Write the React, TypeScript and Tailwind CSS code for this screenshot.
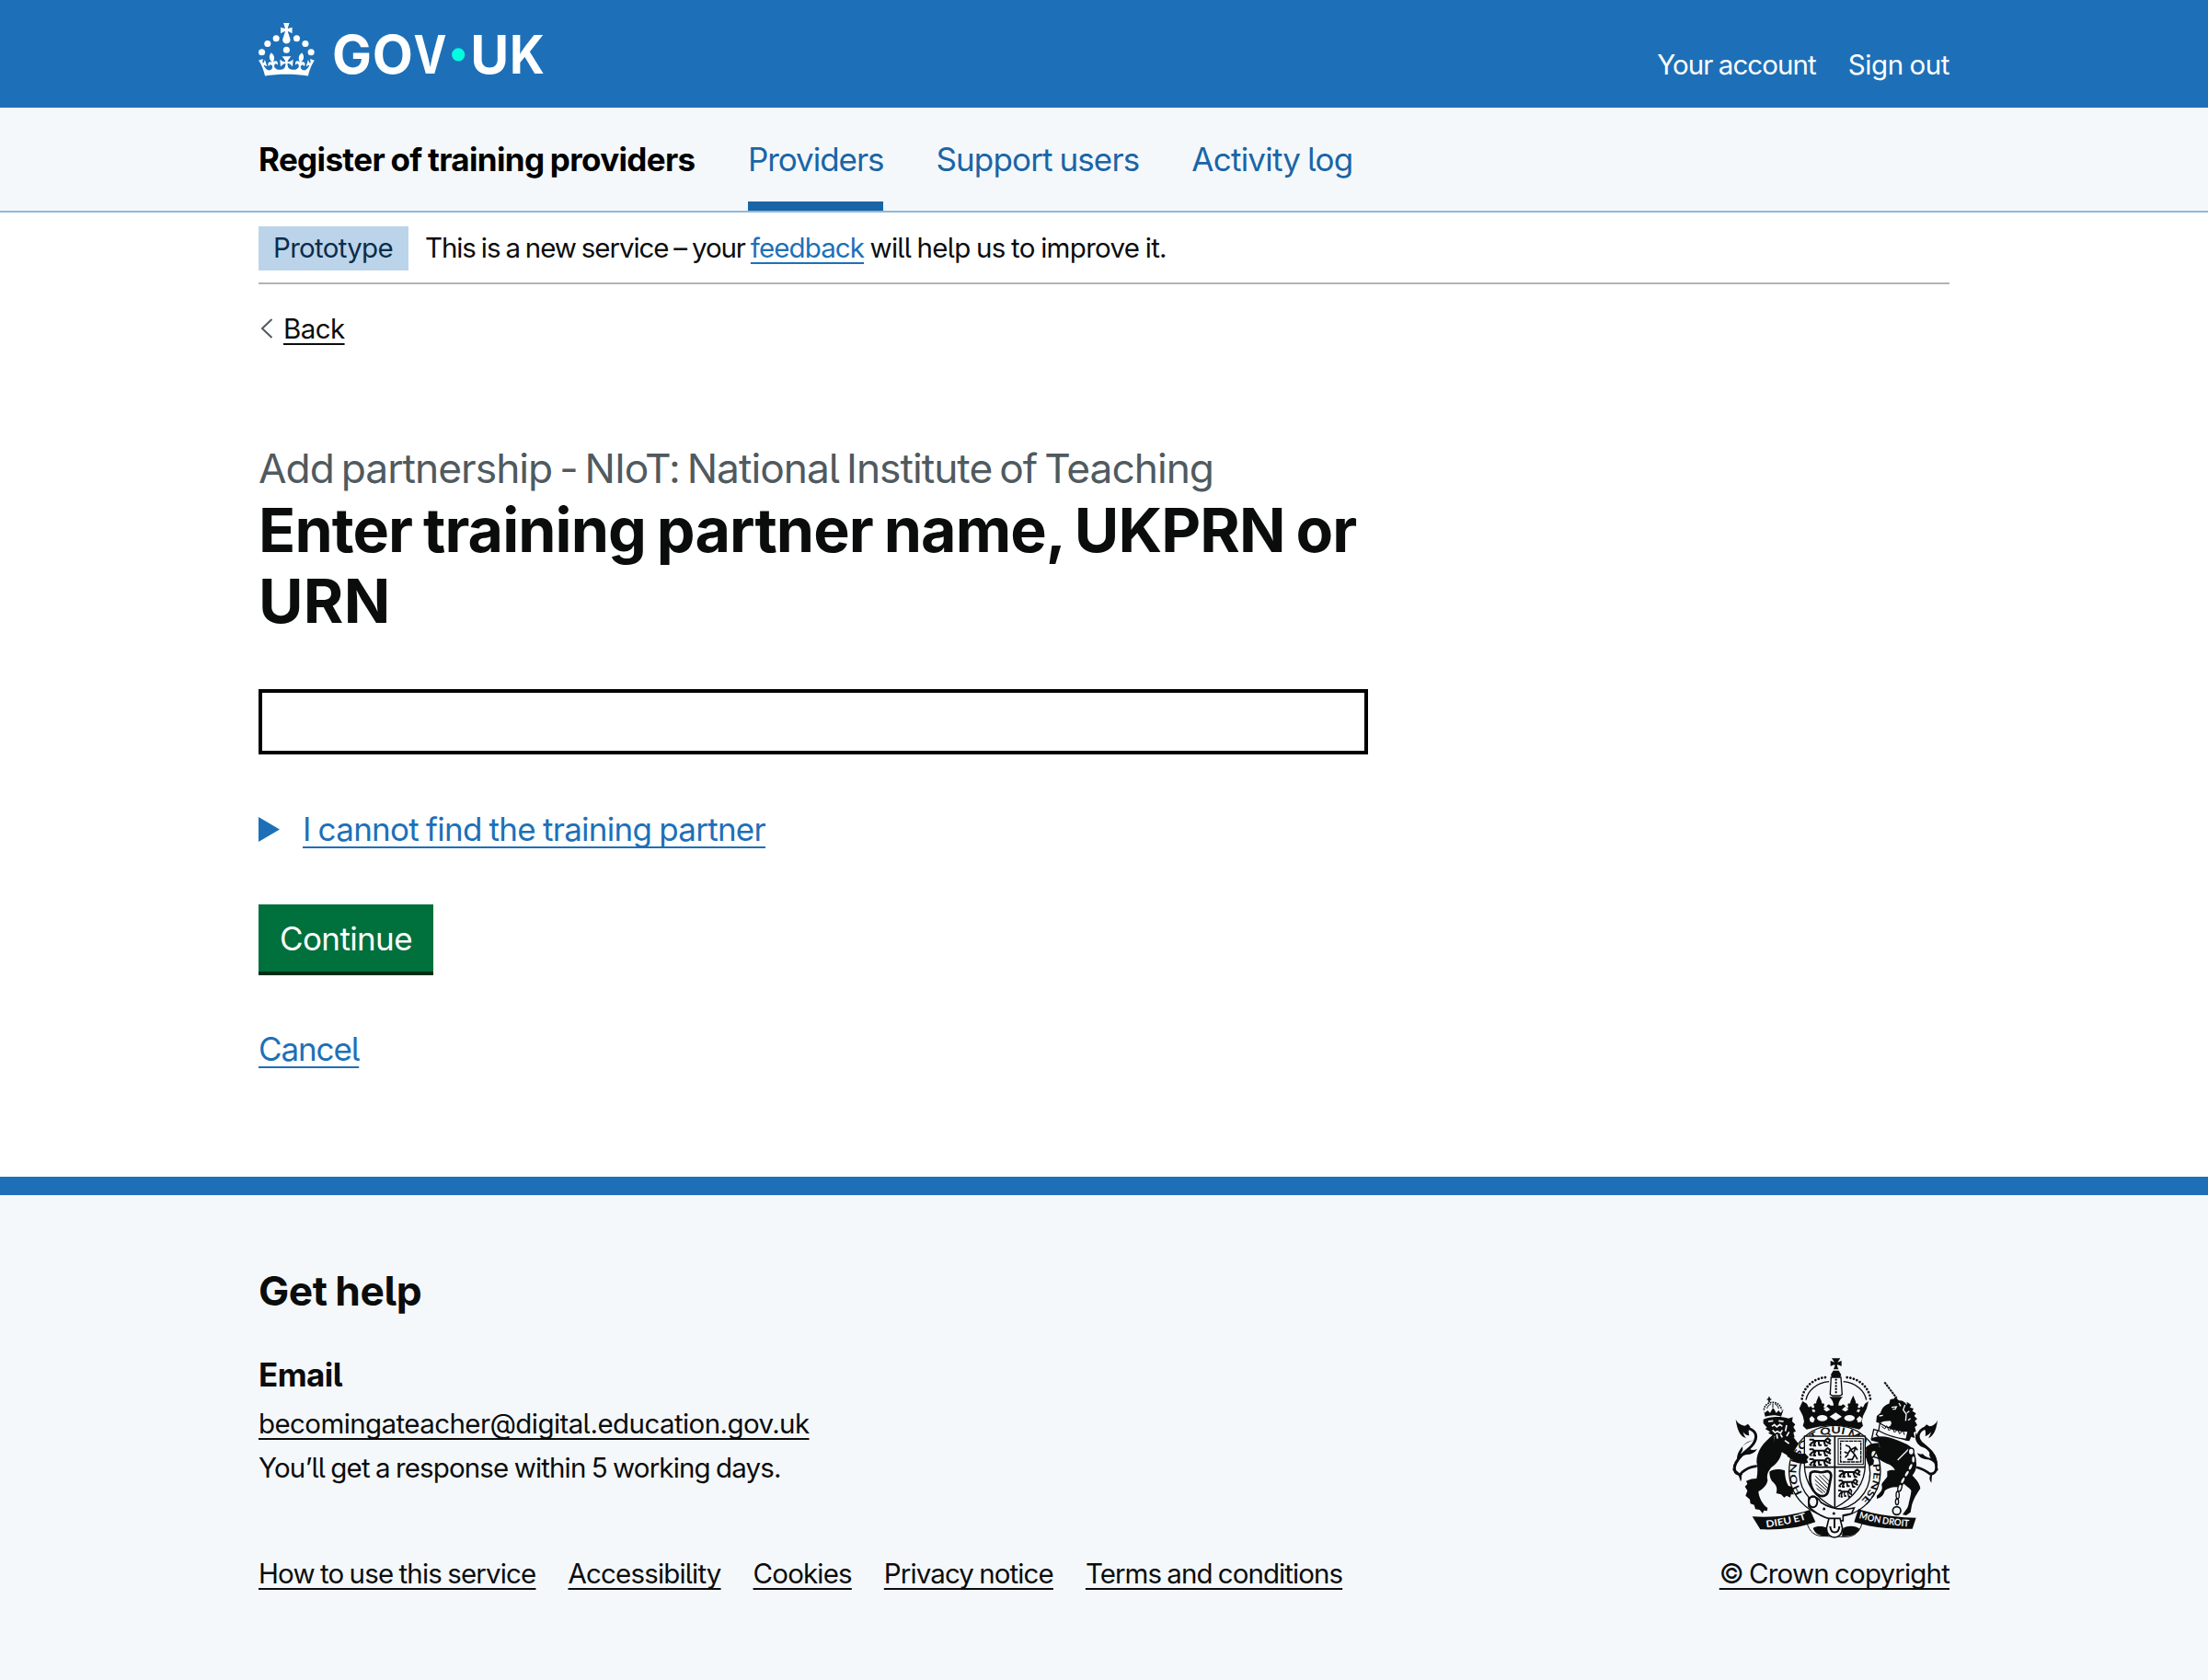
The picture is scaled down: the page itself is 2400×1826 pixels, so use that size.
import type { ReactNode } from 'react';

const INK = '#0b0c0c';
const PAPER = '#f4f8fb';

function Container({ children, className = '' }: { children: ReactNode; className?: string }) {
  return <div className={`mx-auto w-[1838px] ${className}`}>{children}</div>;
}

function Logo() {
  return (
    <svg viewBox="0 0 324 60" className="mt-[25px] h-[57.4px] w-[310px] overflow-visible" fill="#fff" aria-label="GOV.UK">
      <circle cx="20" cy="17.6" r="3.7" />
      <circle cx="10.2" cy="23.5" r="3.7" />
      <circle cx="3.7" cy="33.2" r="3.7" />
      <circle cx="31.7" cy="30.6" r="3.7" />
      <circle cx="43.3" cy="17.6" r="3.7" />
      <circle cx="53.2" cy="23.5" r="3.7" />
      <circle cx="59.7" cy="33.2" r="3.7" />
      <path d="M33.1,9.8c.2-.1.3-.3.5-.5l4.6,2.4v-6.8l-4.6,1.5c-.1-.2-.3-.3-.5-.5l1.9-5.9h-6.7l1.9,5.9c-.2.1-.3.3-.5.5l-4.6-1.5v6.8l4.6-2.4c.1.2.3.3.5.5l-2.6,8c-.9,2.8,1.2,5.7,4.1,5.7h0c3,0,5.1-2.9,4.1-5.7l-2.6-8ZM37,37.9s-3.4,3.8-4.1,6.1c2.2,0,4.2-.5,6.4-2.8l-.7,8.5c-2-2.8-4.4-4.1-5.7-3.8.1,3.1.5,6.7,5.8,7.2,3.7.3,6.7-1.5,7-3.8.4-2.6-2-4.3-3.7-1.6-1.4-4.5,2.4-6.1,4.9-3.2-1.9-4.5-1.8-7.7,2.4-10.9,3,4,2.6,7.3-1.2,11.1,2.4-1.3,6.2,0,4,4.6-1.2-2.8-3.7-2.2-4.2.2-.3,1.7.7,3.7,3,4.2,1.9.3,4.7-.9,7-5.9-1.3,0-2.4.7-3.9,1.7l2.4-8c.6,2.3,1.4,3.7,2.2,4.5.6-1.6.5-2.8,0-5.3l5,1.8c-2.6,3.6-5.2,8.7-7.3,17.5-7.4-1.1-15.7-1.7-24.5-1.7h0c-8.8,0-17.1.6-24.5,1.7-2.1-8.9-4.7-13.9-7.3-17.5l5-1.8c-.5,2.5-.6,3.7,0,5.3.8-.8,1.6-2.3,2.2-4.5l2.4,8c-1.5-1-2.6-1.7-3.9-1.7,2.3,5,5.2,6.2,7,5.9,2.3-.4,3.3-2.4,3-4.2-.5-2.4-3-3.1-4.2-.2-2.2-4.6,1.6-6,4-4.6-3.7-3.7-4.2-7.1-1.2-11.1,4.2,3.2,4.3,6.4,2.4,10.9,2.5-2.8,6.3-1.3,4.9,3.2-1.8-2.7-4.1-1-3.7,1.6.3,2.3,3.3,4.1,7,3.8,5.4-.5,5.7-4.2,5.8-7.2-1.3-.2-3.7,1-5.7,3.8l-.7-8.5c2.2,2.3,4.2,2.7,6.4,2.8-.7-2.3-4.1-6.1-4.1-6.1h10.6,0Z" />
      <g fontFamily="Inter, sans-serif" fontWeight="700" fontSize="59.9">
        <text x="83.500" y="57.5">G</text>
        <text x="129.3" y="57.5">O</text>
        <text x="176.2" y="57.5" textLength="37.5" lengthAdjust="spacingAndGlyphs">V</text>
        <text x="240.8" y="57.5">U</text>
        <text x="285.500" y="57.5" textLength="39.6" lengthAdjust="spacingAndGlyphs">K</text>
      </g>
      <circle cx="227" cy="36" r="7.4" fill="#00ffe0" />
    </svg>
  );
}

function HeraldicLion({ x, y, w = 78 }: { x: number; y: number; w?: number }) {
  return (
    <g transform={`translate(${x} ${y}) scale(${w / 78} 1)`}>
      <path
        fill="none"
        stroke={INK}
        strokeWidth="6"
        strokeLinejoin="round"
        d="M4 6l12 0 4 6 -12 8M18 10h38l8 6 10 4M24 12l-6 14h8M52 12l4 14h8M34 12l2 12h8M56 8l8-6 8 6-4 6M4 22l8 4"
      />
    </g>
  );
}

/* Royal coat of arms: crown, garter and shield, lion, unicorn and motto scrolls. */
function RoyalArms() {
  return (
    <svg viewBox="60 40 690 600" className="mr-[9px] h-[200px] w-[230px]" fill={INK} aria-label="Royal coat of arms">
      <defs>
        <path id="garter" d="M299 491A126 126 0 1 1 484 518" />
        <path id="scrollLeft" d="M180 602C228 596 268 588 314 573" />
        <path id="scrollRight" d="M481 571C530 586 580 594 650 600" />
      </defs>

      {/* crown */}
      <path d="M393 50h28l-9 13 13-5v18l-12-5-3 2 5 13h-16l5-13-3-2-12 5V58l13 5z" />
      <path d="M398 90h18l8 14-4 9-13 4-13-4-4-9z" />
      <path d="M391 112l-3 56 8 4h24l7-4-4-56z" fill={PAPER} stroke={INK} strokeWidth="4" />
      <path d="M407 120v48" stroke={INK} strokeWidth="7" strokeLinecap="round" strokeDasharray="0.1 10" fill="none" />
      <path d="M296 182C300 145 335 112 380 112M519 182C515 145 480 112 435 112" fill="none" stroke={INK} strokeWidth="8" strokeLinecap="round" strokeDasharray="0.1 11" />
      <path d="M309 186C314 158 340 130 384 126M506 186C501 158 475 130 431 126" fill="none" stroke={INK} strokeWidth="4" />
      <path d="M298 190l14 8 6 12 8-4c2 8 8 8 11 2-4-4-4-8 0-11 4 2 6 0 6-6l8-20 9 20c0 6 2 8 6 6 4 2 4 7 0 11 3 6 8 6 11-2 3-6 8-8 12-2l10 0c0-12-6-20-14-28h44c-8 8-14 16-14 28l10 0c4-6 9-4 12 2 3 8 8 8 11 2-4-4-4-9 0-11 4 2 6 0 6-6l9-20 8 20c0 6 2 8 6 6 4 3 4 7 0 11 3 6 9 6 11-2l7 4 6-12 12-8-6 24-12 24-4 18 4 14-12 12a300 300 0 0 0-172 0l-12-12 4-14-4-18-12-24z" />
      <g fill={PAPER}>
        <ellipse cx="362" cy="245" rx="17" ry="10" />
        <path d="M386 240l20-13 20 13-20 13z" />
        <ellipse cx="451" cy="245" rx="17" ry="10" />
        <path d="M320 246l8-8 10 10-5 12-10-3zM492 246l-8-8-10 10 5 12 10-3z" />
        <path d="M366 216l12-8 10 10-12 6zM448 216l-12-8-10 10 12 6zM328 218l8-2 4 8-8 2zM486 218l-8-2-4 8 8 2z" />
      </g>

      {/* lion tail */}
      <g fill="none" stroke={INK} strokeLinecap="round">
        <path d="M120 278C148 286 152 306 138 328S84 368 76 404" strokeWidth="9" />
        <path d="M76 404c-2 22 10 26 22 24M98 424c14-12 26-20 48-22" strokeWidth="8" />
      </g>
      <path d="M80 250c8 14 18 18 30 20l10-6 8 10c-8 8-6 16-4 28-10 0-16-6-20-12 2 8 4 14 10 20-18-4-28-20-34-60z" />
      <path d="M138 318c-14 0-28 8-36 20 2 8 0 16-6 22 12 2 22-4 30-14 6 4 14 4 24 0-8 12-20 18-34 18-16 2-26 14-30 28-4-14-2-30 8-44 8-14 24-26 44-30z" />
      <path d="M74 394l-4 20 20 20 6 18c4-8 4-14 2-22l-16-14z" />

      {/* unicorn tail */}
      <g fill="none" stroke={INK} strokeLinecap="round">
        <path d="M700 276C670 288 668 312 690 330S734 366 734 400" strokeWidth="9" />
        <path d="M734 402c0 24-12 26-22 24M714 428c-14-12-26-18-42-22" strokeWidth="8" />
      </g>
      <path d="M738 252c-6 12-14 18-26 20l-10-6-10 12c8 6 8 16 6 26 8-2 14-6 18-14 0 8-4 14-8 20 16-6 26-24 30-58z" />
      <path d="M668 292c-6 20 0 34 16 46 14 4 24 10 28 20-2 6 0 12 4 18-12-2-20-6-26-14-6 2-12 0-18-4 4 14 16 20 32 22 16 2 26 12 30 26 4-16 2-32-8-46-10-16-26-20-40-32z" />
      <path d="M736 394l4 20-20 18-2 24c-6-8-8-16-4-24l16-16z" />

      {/* lion body and legs */}
      <path d="M206 326l34-26 26 4c14 20 28 36 44 54l10 24-10 14-34-4-28-26-18-10c-4 22-14 36-34 50-12 14-16 26-12 42-2 14-14 28-30 36 2 20 10 34 22 48l8 6-2 10-10-2-4 10-10-12-14-2-4-14-12-4-2-14-14-12 6-16-8-14 8-8-4-10c14-6 22-8 34-8 4-18 4-36 0-54 0-34 20-62 58-92z" />
      <path d="M190 420c10-10 34-10 50-4 0 20 4 38 12 50 10 2 16 6 20 12l-6 8 4 8-10 0-2 10-12-6-8 6-10-10-16-4c4-14 2-24-8-34-10-8-14-20-14-36z" />

      {/* lion head, mane and crown */}
      <path d="M170 250c14-10 60-12 82-4l14-4-2 14 10 10-6 8 8 14-8 4 4 16-10 0c2 12-6 18-18 22-16 2-30 0-40-6l4-20-22-10 6-4-16-10 6-4-12-14z" />
      <path d="M186 256l16-2M220 254l16 2M198 272l8-6 8 8 10-8 8 6M200 284l8 8 8-4 10 6 6-10M214 298l2 14M226 298l6 10M246 268l-4 20M254 290l-8 14M240 318l14 10" stroke={PAPER} strokeWidth="5" fill="none" />
      <path d="M172 218c2-16 14-24 28-24s26 8 30 24" fill="none" stroke={INK} strokeWidth="5" strokeDasharray="5 3" />
      <path d="M182 214c2-8 6-12 12-14M220 214c-2-8-6-12-12-14M201 198v14" fill="none" stroke={INK} strokeWidth="3" />
      <path d="M170 216l6 24c18-6 36-6 52 0l8-24-10 12-6-8-8 8-8-14h-4l-8 14-8-8-10 8z" />
      <path d="M182 184h14M189 176v18" stroke={INK} strokeWidth="5" fill="none" />

      {/* unicorn horn, head, mane */}
      <path d="M565 128l40 52" stroke={INK} strokeWidth="6" strokeDasharray="8 2" fill="none" />
      <path d="M540 238l12-10c6-18 14-26 28-30l4-14 12-2 4-6 12 12c14-2 20 6 26 14l0-10 14 10-4 8 12 4-4 8 12 8-6 8 10 10-8 6 8 14-8 6 4 14-8 4 4 18-12-4-6 14-12-2c-16-6-42-12-76-28 4-8 16-14 26-20 6-8 4-14-2-16-12 2-22 0-30 8l-14-4z" />
      <path d="M588 210l16-2-4 8-8 0M632 202l-6 16 10 14-2 22M646 222l-8 6M650 246l-8 6M548 238l12-2M612 196l6 10" stroke={PAPER} strokeWidth="4" fill="none" />
      <path d="M550 262c24 16 58 26 92 26l-6 26c-34-4-66-14-90-28z" fill={PAPER} stroke={INK} strokeWidth="4" />
      <path d="M556 272l10 8 6-10 8 16 10-10 8 16 10-10 6 14 12-10 4 14" stroke={INK} strokeWidth="3" fill="none" />
      <path d="M530 282l14 4-6 12 8 8-10 12-12-8z" fill={PAPER} stroke={INK} strokeWidth="4" />

      {/* unicorn body */}
      <path d="M520 312c30-14 60-6 90 6l28 12c20 10 28 28 30 56 4 20-2 34-12 46 12 12 24 26 26 42-10 16-22 32-28 56l-4 22-14 10-12-2c10-16 18-20 20-36 4-20 8-30 8-44-16-18-40-28-48-48-4-20-10-32-30-38-12-6-24-12-34-22l-12-8c-4 12 0 22 6 30l-2 14-12 6c-10-14-14-32-12-56 10-12 24-16 42-18l-4-16-24-6z" />
      <path d="M574 418c14-6 28-6 38 4l20 24-10 26c-24-6-46 0-56 10-4 16-14 24-26 26l0-10c14-12 20-20 16-34-2-6 10-16 18-28z" />
      <path d="M644 346l-36 36" stroke={PAPER} strokeWidth="4" fill="none" />
      <g fill={PAPER} stroke={INK} strokeWidth="4">
        <ellipse cx="652" cy="354" rx="9" ry="11" />
        <ellipse cx="659" cy="380" rx="6" ry="12" />
        <ellipse cx="650" cy="404" rx="6" ry="12" transform="rotate(25 650 404)" />
        <ellipse cx="638" cy="426" rx="6" ry="12" transform="rotate(30 638 426)" />
        <ellipse cx="625" cy="448" rx="6" ry="12" transform="rotate(25 625 448)" />
        <ellipse cx="615" cy="472" rx="6" ry="12" transform="rotate(15 615 472)" />
        <ellipse cx="608" cy="496" rx="5" ry="12" />
        <ellipse cx="606" cy="518" rx="5" ry="10" />
      </g>
      <circle cx="605" cy="547" r="13" fill="none" stroke={INK} strokeWidth="5" />

      {/* garter */}
      <ellipse cx="403" cy="418" rx="149" ry="149" fill={PAPER} stroke={INK} strokeWidth="4" />
      <ellipse cx="403" cy="424" rx="115" ry="118" fill={PAPER} stroke={INK} strokeWidth="4" />
      <g fontFamily="Lato, sans-serif" fontWeight="700" fontSize="31">
        <text>
          <textPath href="#garter" startOffset="2" textLength="572" lengthAdjust="spacingAndGlyphs">HONI SOIT QUI MAL Y PENSE</textPath>
        </text>
      </g>

      {/* shield */}
      <path d="M304 304h198v92c0 66-42 112-99 142-57-30-99-76-99-142z" fill={PAPER} stroke={INK} strokeWidth="4" />
      <path d="M403 304v232M304 405h198" stroke={INK} strokeWidth="5" fill="none" />
      <HeraldicLion x={316} y={309} />
      <HeraldicLion x={316} y={341} />
      <HeraldicLion x={316} y={373} />
      <HeraldicLion x={412} y={411} />
      <HeraldicLion x={412} y={443} w={70} />
      <HeraldicLion x={412} y={475} w={50} />
      <rect x="414" y="312" width="82" height="84" fill="none" stroke={INK} strokeWidth="3" />
      <rect x="422" y="320" width="66" height="68" fill="none" stroke={INK} strokeWidth="4" strokeDasharray="12 2" />
      <path d="M440 334l10 4 6 10 14-8 6 8M454 348l-8 12-10-4M456 350l12 14-8 16-14 0M468 364l8 14M446 364l-8 8M470 344l-4 10" fill="none" stroke={INK} strokeWidth="5" strokeLinecap="round" />
      <path d="M324 424c14-14 30 4 46-4 14-6 24 4 20 20l-8 40c-4 20-20 24-36 14-18-12-28-40-22-70z" fill={PAPER} stroke={INK} strokeWidth="8" />
      <path d="M340 434l40 40M338 446l40 36M340 460l32 28M352 432l32 32M364 430l22 22M344 474l20 16" stroke={INK} strokeWidth="3" fill="none" />

      {/* paw and hoof resting on the garter */}
      <path d="M246 330l28 26 18 6 14-2 12 12-6 8 4 10-14 4-20-2-34-22z" />
      <path d="M548 326c-20 0-34 6-42 14-4 22-2 42 10 62l13-6 2-14c-8-8-10-18-6-28l24-6z" />

      {/* strap and buckle */}
      <path d="M318 506c20-10 34 0 40 14 30 20 70 26 108 18l-8 18-28 6 0 18c-44 0-82-18-112-46z" fill={PAPER} stroke={INK} strokeWidth="5" />
      <ellipse cx="332" cy="518" rx="14" ry="18" fill="none" stroke={INK} strokeWidth="6" />
      <circle cx="368" cy="541" r="4.500" />
      <circle cx="400" cy="556" r="4.500" />

      {/* scrolls */}
      <path d="M134 566c66 4 126-2 188-22l18 40c-56 20-112 26-180 24z" />
      <path d="M668 570c-62-2-124-8-188-28l-14 42c56 18 120 24 190 22z" />
      <g fontFamily="Lato, sans-serif" fontWeight="700" fontSize="31" fill={PAPER}>
        <text>
          <textPath href="#scrollLeft" textLength="134" lengthAdjust="spacingAndGlyphs">DIEU ET</textPath>
        </text>
        <text>
          <textPath href="#scrollRight" textLength="166" lengthAdjust="spacingAndGlyphs">MON DROIT</textPath>
        </text>
      </g>
      <path d="M312 586c8 30 26 46 60 44l60 2c36 2 52-16 60-44" fill="none" stroke={INK} strokeWidth="3" />
      <path d="M332 604c10-8 34-8 46 0l4 26c-24 0-42-4-50-26zM484 606c-12-10-38-12-54-2l-4 26c26 0 46-2 58-24z" />
      <path d="M384 572h36l8 32c0 20-14 30-26 30s-26-10-26-30z" fill={PAPER} stroke={INK} strokeWidth="5" />
      <path d="M388 598c2 26 28 26 30 0M402 574v30" fill="none" stroke={INK} strokeWidth="6" />
    </svg>
  );
}

const link = 'underline decoration-2 underline-offset-[5px] [text-decoration-skip-ink:none]';
const linkLarge = 'underline decoration-2 underline-offset-[6px] [text-decoration-skip-ink:none]';

export default function App() {
  return (
    <div className="min-h-[1826px] bg-white font-['Inter',sans-serif] text-[29.5px] leading-[40px] text-[#0b0c0c] [font-feature-settings:'cv05'] [word-spacing:-1.2px]">
      <header className="h-[117px] bg-[#1d70b8] text-white">
        <Container className="flex justify-between">
          <Logo />
          <nav className="flex gap-[35px] pt-[50px]">
            <a className="tracking-[-0.031em]">Your account</a>
            <a className="tracking-[-0.014em]">Sign out</a>
          </nav>
        </Container>
      </header>

      <section className="border-b-2 border-[#8eb8dc] bg-[#f4f8fb]">
        <Container className="flex h-[112px] gap-[57px] text-[35px] text-[#1a65a6]">
          <span className="flex w-[475px] items-center font-bold whitespace-nowrap tracking-[-0.0185em] text-black">
            Register of training providers
          </span>
          <a className="flex items-center border-y-[10px] border-t-transparent border-b-[#1a65a6] tracking-[-0.03em]">Providers</a>
          <a className="flex items-center tracking-[-0.0245em]">Support users</a>
          <a className="flex items-center tracking-[-0.022em]">Activity log</a>
        </Container>
      </section>

      <Container>
        <div className="flex items-center gap-[18px] border-b-2 border-[#b1b4b6] pt-[15px] pb-[13px]">
          <strong className="flex h-12 w-[163px] items-center justify-center bg-[#bbd4ea] pr-px pb-[3px] font-normal tracking-[-0.024em] text-[#0c2d4a]">
            Prototype
          </strong>
          <p className="pb-[3px] tracking-[-0.037em]">
            This is a new service – your <a className={`tracking-[-0.031em] text-[#1d70b8] ${link}`}>feedback</a>
            <span className="tracking-[-0.0235em]"> will help us to improve it.</span>
          </p>
        </div>

        <a className="mt-7 flex items-center">
          <svg viewBox="0 0 14 22" className="mr-[11px] ml-[2px] h-[22px] w-[14px]" fill="none" stroke="#505a5f" strokeWidth="2">
            <path d="M12.500 1L2 11l10.500 10" />
          </svg>
          <span className={`tracking-[-0.02em] ${link}`}>Back</span>
        </a>

        <main className="mt-[104px] flex flex-col items-start">
          <span className="text-[44.3px] leading-[56px] tracking-[-0.0225em] text-[#505a5f] [word-spacing:-3.5px]">
            Add partnership - NIoT: National Institute of Teaching
          </span>
          <h1 className="mt-px w-[1206px] text-[66.3px] leading-[77px] font-bold tracking-[-0.0135em] [word-spacing:-3px]">
            Enter training partner name, UKPRN or <span className="tracking-[0.005em]">URN</span>
          </h1>
          <input className="mt-[57px] h-[71px] w-[1206px] border-4 border-black bg-white px-2 outline-none" />
          <div className="mt-[57px] flex items-center gap-[25px] text-[35px] leading-[48px] text-[#1d70b8]">
            <svg viewBox="0 0 23 27" className="h-[27px] w-[23px]" fill="currentColor">
              <path d="M0 0l23 13.500L0 27z" />
            </svg>
            <span className={`tracking-[-0.0205em] ${linkLarge}`}>I cannot find the training partner</span>
          </div>
          <button className="mt-[58px] h-[73px] w-[190px] bg-[#00703c] text-[35px] tracking-[-0.018em] text-white shadow-[0_4px_0_#002d18]">
            Continue
          </button>
          <a className={`mt-[60px] text-[35px] leading-[48px] tracking-[-0.032em] text-[#1d70b8] ${linkLarge}`}>Cancel</a>
        </main>
      </Container>

      <footer className="mt-[115px] h-[547px] border-t-[20px] border-[#1d70b8] bg-[#f4f8fb] pt-[76px]">
        <Container className="flex items-end justify-between">
          <div>
            <h2 className="text-[44.3px] leading-[56px] font-bold tracking-[-0.01em]">Get help</h2>
            <h3 className="mt-[39px] text-[35px] leading-[48px] font-bold tracking-[-0.017em]">Email</h3>
            <p className="mt-[5px] leading-[48px] tracking-[-0.02em]">
              <a className={link}>becomingateacher@digital.education.gov.uk</a>
            </p>
            <p className="leading-[48px] tracking-[-0.029em]">You’ll get a response within 5 working days.</p>
            <nav className="mt-[71px] flex gap-[35px]">
              <a className={`tracking-[-0.0285em] ${link}`}>How to use this service</a>
              <a className={`tracking-[-0.028em] ${link}`}>Accessibility</a>
              <a className={`tracking-[-0.028em] ${link}`}>Cookies</a>
              <a className={`tracking-[-0.03em] ${link}`}>Privacy notice</a>
              <a className={`tracking-[-0.0315em] ${link}`}>Terms and conditions</a>
            </nav>
          </div>
          <div className="flex flex-col items-end gap-[17px]">
            <RoyalArms />
            <a className={`tracking-[-0.0285em] ${link}`}>© Crown copyright</a>
          </div>
        </Container>
      </footer>
    </div>
  );
}
